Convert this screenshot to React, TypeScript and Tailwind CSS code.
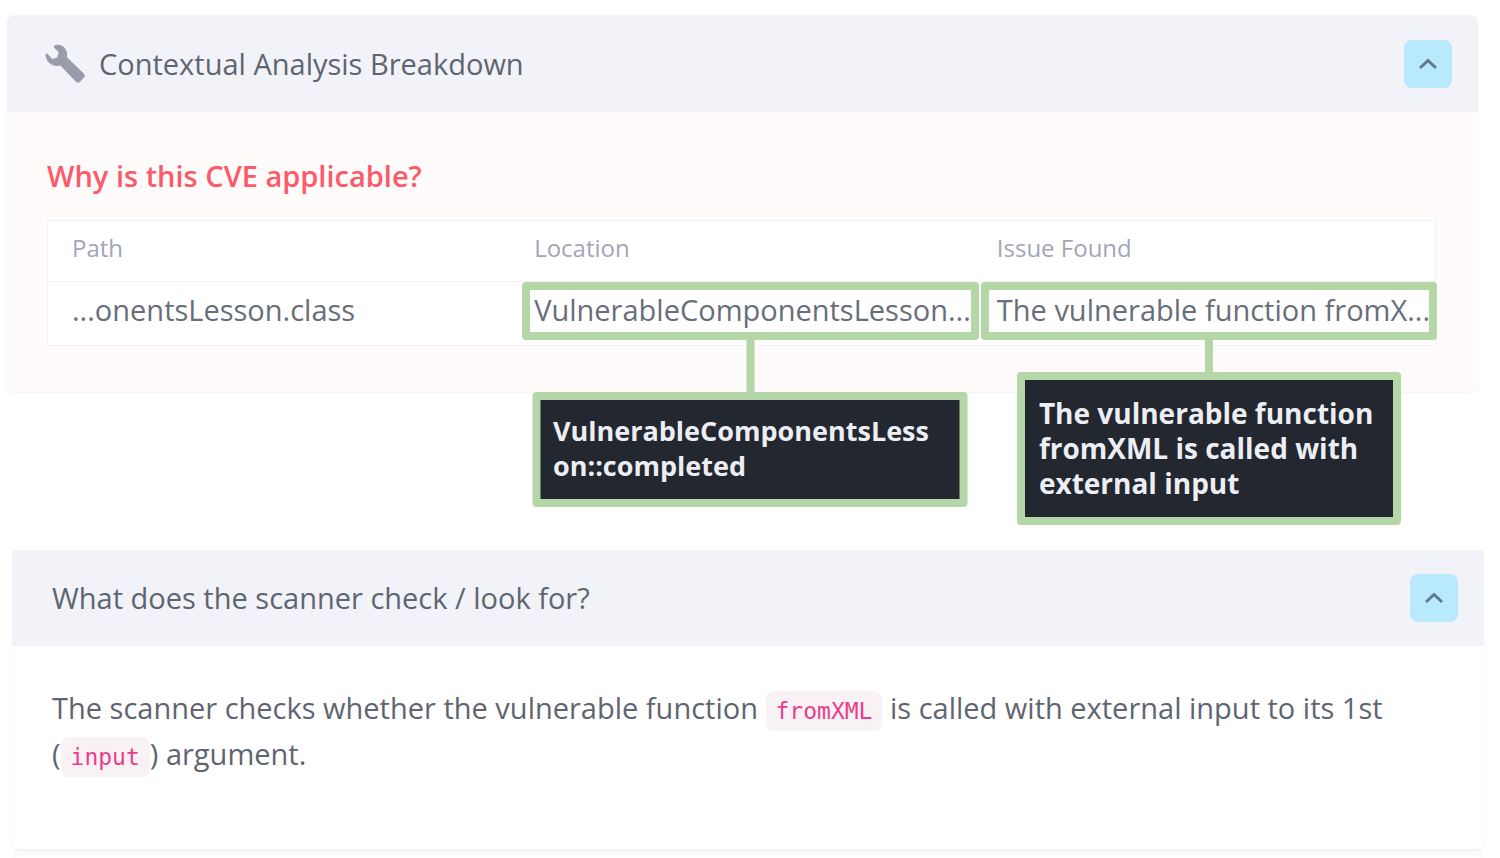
import React, { useState } from 'react'

function Wrench() {
  return (
    <svg viewBox="0 0 40 40" className="w-10 h-10 shrink-0" fill="#989cab" aria-hidden="true">
      <path d="M9 2C10.500.3 14 .3 16.500 1.500C21 3.700 23 8.500 21.900 13.300L39 29.800C40 31 40 32.500 39 33.600L34.800 38C33.700 39 32.200 39 31.200 38L15.300 21.600C9.500 23 3.500 20.200 1.300 14.500C.6 12.500.4 10.700.9 9.800C1.400 9.100 2.400 9.500 3 10.300L7.200 14.900L12.300 13.600L13.700 8.200L9.500 4C8.800 3.300 8.500 2.700 9 2z" />
    </svg>
  )
}

function ToggleButton({ open, label, onClick }: { open: boolean; label: string; onClick: () => void }) {
  return (
    <button
      type="button"
      aria-label={label}
      aria-expanded={open}
      onClick={onClick}
      className="flex items-center justify-center w-12 h-12 rounded-lg bg-[#b9e9fd] cursor-pointer"
    >
      <svg viewBox="0 0 20 12" className={open ? 'w-5 h-3' : 'w-5 h-3 rotate-180'} fill="none" stroke="#5f7a8c" strokeWidth="3">
        <path d="M2 10 10 2.500l8 7.500" />
      </svg>
    </button>
  )
}

function Code({ children }: { children: React.ReactNode }) {
  return (
    <code className="px-[10px] py-[7px] rounded-lg bg-[#f9f2f4] text-[#e83e8c] font-['DejaVu_Sans_Mono',monospace] text-[23px] leading-8">
      {children}
    </code>
  )
}

// green frame over a table cell, with its full text in a dark box below
function Callout({ frame, line, box, children }: { frame: string; line: string; box: string; children: React.ReactNode }) {
  return (
    <div className={`absolute top-0 h-[58px] border-8 border-[#b5d6a7] rounded-sm ${frame}`}>
      <div className="absolute top-full left-1/2 -translate-x-1/2 flex flex-col items-center">
        <span className={`w-2 bg-[#b5d6a7] ${line}`}></span>
        <div className={`border-8 border-[#b5d6a7] rounded-sm bg-[#23272f] text-[#eceef4] font-bold leading-[35px] ${box}`}>
          {children}
        </div>
      </div>
    </div>
  )
}

export default function App() {
  const [analysisOpen, setAnalysisOpen] = useState(true)
  const [scannerOpen, setScannerOpen] = useState(true)

  return (
    <main className="flex flex-col pt-[15px] bg-white font-['Open_Sans',sans-serif] text-[#5f6570]">
      <section className="ml-[7px] mr-[22px] rounded-lg bg-[#fffbfa] shadow-sm shadow-[#f1f3f8]">
        <header className="flex items-center justify-between h-[97px] pl-[38px] pr-[26px] rounded-t-lg bg-[#f1f3f8]">
          <div className="flex items-center gap-[14px]">
            <Wrench />
            <h2 className="text-[29px] leading-10">Contextual Analysis Breakdown</h2>
          </div>
          <ToggleButton open={analysisOpen} label="Toggle contextual analysis" onClick={() => setAnalysisOpen(!analysisOpen)} />
        </header>

        {analysisOpen && (
          <div className="pt-11 pb-[46px] pl-10 pr-[42px]">
            <h3 className="text-[29px] leading-10 font-semibold text-[#fb5a68]">Why is this CVE applicable?</h3>
            <table className="w-full mt-6 table-fixed border border-[#f1f2f8] bg-white text-left whitespace-nowrap">
              <thead>
                <tr className="h-[61px] border-b border-[#f1f2f8] text-[24px] leading-9 text-[#a3a5b8]">
                  <th className="pl-6 pb-[6px] font-normal">Path</th>
                  <th className="pl-6 pb-[6px] font-normal">Location</th>
                  <th className="pl-6 pb-[6px] font-normal">Issue Found</th>
                </tr>
              </thead>
              <tbody>
                <tr className="h-16 text-[29px] leading-10 text-[#686e79]">
                  <td className="pl-6 pb-2">...onentsLesson.class</td>
                  <td className="relative pl-6 pb-2">
                    VulnerableComponentsLesson...
                    <Callout frame="left-[12px] -right-[6px]" line="h-[60px]" box="w-[435px] h-[115px] px-3 pt-[13px] text-[27px]">
                      VulnerableComponentsLess
                      <br />
                      on::completed
                    </Callout>
                  </td>
                  <td className="relative pl-6 pb-2">
                    The vulnerable function fromX...
                    <Callout frame="left-2 -right-[2px]" line="h-10" box="w-[384px] h-[153px] px-[14px] pt-4 text-[28px]">
                      The vulnerable function
                      <br />
                      fromXML is called with
                      <br />
                      external input
                    </Callout>
                  </td>
                </tr>
              </tbody>
            </table>
          </div>
        )}
      </section>

      <section className="mt-[158px] ml-3 mr-4 rounded-lg border-b-2 border-[#f3f4f6] shadow-sm shadow-[#f1f3f8]">
        <header className="flex items-center justify-between h-24 pl-10 pr-[26px] rounded-t-sm bg-[#f1f3f8]">
          <h2 className="text-[29px] leading-10">What does the scanner check / look for?</h2>
          <ToggleButton open={scannerOpen} label="Toggle scanner details" onClick={() => setScannerOpen(!scannerOpen)} />
        </header>

        {scannerOpen && (
          <div className="pt-[39px] pb-[72px] px-10">
            <p className="text-[29px] leading-[46px]">
              The scanner checks whether the vulnerable function <Code>fromXML</Code> is called with external input to its 1st
              <br />
              (<Code>input</Code>) argument.
            </p>
          </div>
        )}
      </section>
      <footer className="h-[6px] ml-3 mr-4 bg-[#fafbfb]"></footer>
    </main>
  )
}
